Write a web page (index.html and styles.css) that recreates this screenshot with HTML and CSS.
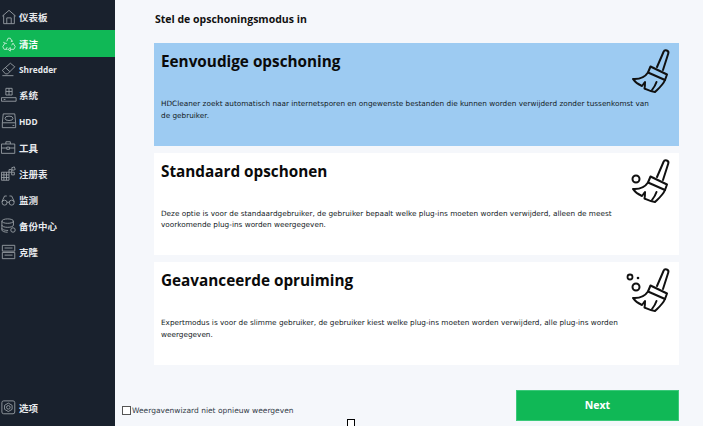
FILE: index.html
```html
<!DOCTYPE html>
<html lang="nl">
<head>
<meta charset="utf-8">
<title>HDCleaner</title>
<link rel="stylesheet" href="styles.css">
</head>
<body>
<svg class="defs" width="0" height="0" aria-hidden="true">
  <defs>
    <g id="broom" fill="none" stroke="#111" stroke-width="2" stroke-linejoin="round" stroke-linecap="round">
      <path d="M26 19 32.500 4a2.500 2.500 0 0 1 4.700 1.800L32 22"/>
      <path d="M19.500 18.500 36 26.500 34 32 17 24.500z"/>
      <path d="M17 24.500C14 29 9 31.500 2 31 4 34 7 36.500 11 38 12 36.500 13 35.500 14 34 14 36.500 14 38.500 13.500 40.500 17 42 20 43.500 24 44 27 41 32 37 34 32"/>
      <path d="M21 42C23 39.500 24.500 37 25.500 34"/>
    </g>
  </defs>
</svg>
<div class="app">
  <aside class="sidebar">
    <nav class="nav">
      <a class="nav-item"><svg class="nav-icon" viewBox="0 0 18 18"><path d="M1.500 8 9 1.500 16.500 8M3 7V16.500H15V7M6.500 16.500V10H11.500V16.500"/></svg><span>仪表板</span></a>
      <a class="nav-item active"><svg class="nav-icon" viewBox="0 0 18 18"><path d="M6.500 6 8 2.500H10.500L12.500 6M11 6.500 13.500 5.500M4.500 8 2 12 3.500 15H7.500M4.500 8 2.500 7M6.500 8.500 4.500 8M13.500 8 16 12 14.500 15H10.500M13.500 8 12 10.500M10.500 13 10.500 17 8 15 10.500 13M7 12.500 5.500 15"/></svg><span>清洁</span></a>
      <a class="nav-item"><svg class="nav-icon" viewBox="0 0 18 18"><path d="M1.500 10.500 10.500 2.500 15.500 6.500 7.500 14.500H5ZM5 7.500 10 12M1.500 16.500H14"/></svg><span class="latin">Shredder</span></a>
      <a class="nav-item"><svg class="nav-icon" viewBox="0 0 18 18"><path d="M5.500 1.500H12.500V9H5.500ZM5.500 5H12.500M9 1.500V9M.5 12H17V16H.5ZM3 14H5"/></svg><span>系统</span></a>
      <a class="nav-item"><svg class="nav-icon" viewBox="0 0 18 18"><path d="M2.500 1H15.500L16.500 11V16.500H1.500V11ZM1.500 11H16.500M13 14H15"/><ellipse cx="9" cy="6" rx="4.500" ry="2.500"/></svg><span class="latin">HDD</span></a>
      <a class="nav-item"><svg class="nav-icon" viewBox="0 0 18 18"><path d="M.5 4.500H15.500V15H.5ZM5.500 4.500V2H10.500V4.500M.5 9H6.500M9.500 9H15.500M6.500 8H9.500V10.500H6.500Z"/></svg><span>工具</span></a>
      <a class="nav-item"><svg class="nav-icon" viewBox="0 0 18 18"><path d="M.5 7H9V16H.5ZM.5 10H9M.5 13H9M3.300 7V16M6.200 7V16M9 4H12V7H9ZM12 7H15V10H12ZM12 2 15 1 16 4 13 5Z"/></svg><span>注册表</span></a>
      <a class="nav-item"><svg class="nav-icon" viewBox="0 0 18 18"><path d="M1 11 4 4.500H6.500M15 11 12 4.500H9.500M6.500 11.500H9.500"/><circle cx="4" cy="12" r="2.800"/><circle cx="12" cy="12" r="2.800"/></svg><span>监测</span></a>
      <a class="nav-item"><svg class="nav-icon" viewBox="0 0 18 18"><ellipse cx="7.500" cy="3.500" rx="6.500" ry="2.500"/><path d="M1 3.500V13.500C1 15 4 16 7.500 16M14 3.500V8M1 8C1 9.500 4 10.500 7.500 10.500S14 9.500 14 8M1 11.500C1 13 4 14 8 14"/><circle cx="13.500" cy="13.500" r="2.500"/></svg><span>备份中心</span></a>
      <a class="nav-item"><svg class="nav-icon" viewBox="0 0 18 18"><path d="M1.500 1.500H15.500V8H1.500ZM1.500 9.500H15.500V16.500H1.500ZM4 4.500H13M4 12.500H13"/></svg><span>克隆</span></a>
    </nav>
    <a class="nav-item settings"><svg class="nav-icon" viewBox="0 0 18 18"><rect x="1" y="1" width="14.500" height="14.500" rx="2"/><circle cx="8.250" cy="8.250" r="2"/><path d="M8.250 3.500 12.500 6V10.500L8.250 13 4 10.500V6Z"/></svg><span>选项</span></a>
  </aside>
  <main class="main">
    <h1 class="page-title">Stel de opschoningsmodus in</h1>
    <section class="cards">
      <article class="card selected">
        <div class="card-head">
          <h2>Eenvoudige opschoning</h2>
          <svg class="broom" viewBox="0 0 40 46"><use href="#broom"/></svg>
        </div>
        <p>HDCleaner zoekt automatisch naar internetsporen en ongewenste bestanden die kunnen worden verwijderd zonder tussenkomst van de gebruiker.</p>
      </article>
      <article class="card">
        <div class="card-head">
          <h2>Standaard opschonen</h2>
          <svg class="broom" viewBox="0 0 40 46"><use href="#broom"/><circle cx="5" cy="21" r="3.500" fill="none" stroke="#111" stroke-width="2"/></svg>
        </div>
        <p>Deze optie is voor de standaardgebruiker, de gebruiker bepaalt welke plug-ins moeten worden verwijderd, alleen de meest voorkomende plug-ins worden weergegeven.</p>
      </article>
      <article class="card">
        <div class="card-head">
          <h2>Geavanceerde opruiming</h2>
          <svg class="broom wide" viewBox="-6 0 46 46"><use href="#broom"/><circle cx="5" cy="20" r="3.500" fill="none" stroke="#111" stroke-width="2"/><circle cx="-1" cy="10" r="2.500" fill="none" stroke="#111" stroke-width="1.800"/><circle cx="7" cy="11" r="1.300" fill="#111"/></svg>
        </div>
        <p>Expertmodus is voor de slimme gebruiker, de gebruiker kiest welke plug-ins moeten worden verwijderd, alle plug-ins worden weergegeven.</p>
      </article>
    </section>
    <footer class="footer">
      <label class="check"><span class="box"></span>Weergavenwizard niet opnieuw weergeven</label>
      <button class="next">Next</button>
    </footer>
    <span class="marker"></span>
  </main>
</div>
</body>
</html>
```

FILE: styles.css
```css
* { box-sizing: border-box; }
html, body { margin: 0; height: 100%; background: #fff; overflow: hidden; }
body { font-family: "Open Sans", "Noto Sans CJK SC", sans-serif; }
.defs { position: absolute; }
.app { display: flex; width: 703px; height: 426px; }
.sidebar { width: 115px; flex: none; background: #19212d; display: flex; flex-direction: column; padding-top: 4px; }
.nav { flex: 1; display: flex; flex-direction: column; }
.nav-item { height: 26.1px; display: flex; align-items: center; padding-left: 1px; gap: 2px; color: #e8eaed; font-size: 9.500px; font-weight: 700; font-family: "Noto Sans CJK SC", sans-serif; }
.nav-item .latin { font-family: "Open Sans", sans-serif; font-size: 8.300px; }
.nav-item.active { background: #10b856; color: #fff; height: 27px; margin-bottom: -0.9px; }
.nav-icon { width: 16px; height: 16px; flex: none; fill: none; stroke: #9aa0a6; stroke-width: 1; }
.active .nav-icon { stroke: #c6efd6; }
.settings { margin-bottom: 5px; }
.main { flex: 1; position: relative; background: #f5f7fb; padding: 13px 24px 0 39px; display: flex; flex-direction: column; }
.page-title { margin: 0 0 18px 1px; font-size: 10.500px; line-height: 12px; font-weight: 700; color: #111; }
.cards { display: flex; flex-direction: column; gap: 7px; }
.card { background: #fff; height: 102.5px; padding: 8px 7px; }
.card.selected { background: #9dcbf2; }
.card-head { display: flex; justify-content: space-between; align-items: flex-start; height: 47px; }
.card h2 { margin: 0; font-size: 15.300px; line-height: 20px; font-weight: 700; color: #0a0a0a; }
.broom { width: 40px; height: 46px; margin: -3px 1px 0 0; overflow: visible; flex: none; }
.broom.wide { width: 46px; }
.card p { margin: 0; font-family: "DejaVu Sans", sans-serif; font-size: 7.300px; line-height: 11.500px; color: #141b26; max-width: 490px; }
.footer { flex: 1; display: flex; justify-content: space-between; padding: 25.500px 0 0; margin-left: -32px; }
.check { display: flex; align-items: center; height: 12px; margin-top: 14px; gap: 1px; font-family: "DejaVu Sans", sans-serif; font-size: 7.500px; color: #333b48; }
.box { width: 9px; height: 9px; border: 1px solid #555; background: #fff; }
.next { width: 163px; height: 31px; padding: 0 0 2px; border: 1px solid #3bc97a; background: #10b856; color: #fff; font: 700 10.500px "Open Sans", sans-serif; }
.marker { position: absolute; left: 232px; top: 419px; width: 8px; height: 8px; border: 1px solid #000; background: #fff; }
```
